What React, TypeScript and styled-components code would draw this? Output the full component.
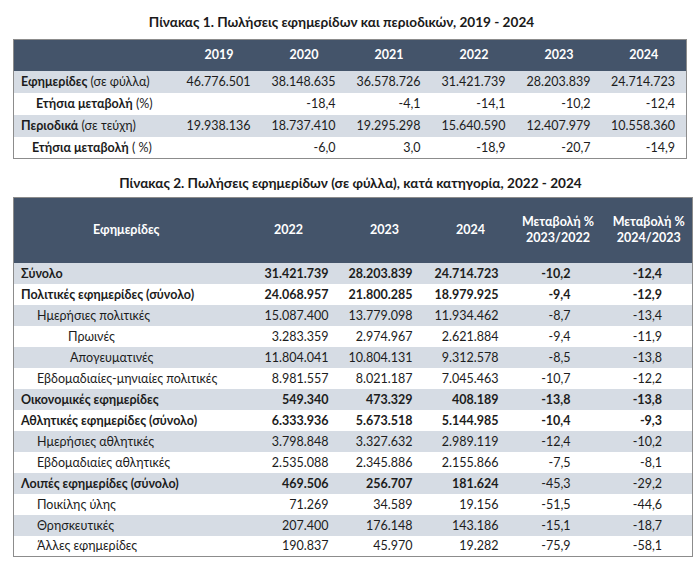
import React from 'react';
import styled, { createGlobalStyle } from 'styled-components';

const Global = createGlobalStyle`
  html, body { margin: 0; padding: 0; background: #ffffff; }
  body { font-family: Lato, "Open Sans", "Noto Sans", sans-serif; color: #1c1c1c; }
`;

const Page = styled.main`
  display: flex;
  flex-direction: column;
  align-items: flex-start;
  padding: 12px 8px 0 13px;
`;

const Title = styled.h2<{ $w: number; $mt: number; $mb: number; $shift: number }>`
  width: ${p => p.$w}px;
  margin: ${p => p.$mt}px 0 ${p => p.$mb}px;
  padding-right: ${p => p.$shift}px;
  box-sizing: border-box;
  font-size: 13.6px;
  font-weight: 700;
  line-height: 20px;
  text-align: center;
  color: #1a1a1a;
`;

const Table = styled.table<{ $w: number }>`
  width: ${p => p.$w}px;
  border-collapse: collapse;
  table-layout: fixed;
  border: 1px solid #8c8c8c;
  font-size: 12.5px;
`;

const HeadRow = styled.tr<{ $h: number }>`
  height: ${p => p.$h}px;
  background: #44546a;
`;

const HeadCell = styled.th`
  color: #ffffff;
  font-weight: 700;
  text-align: center;
  padding: 0;
  line-height: 16px;
`;

const Row = styled.tr<{ $shade: boolean; $h: number }>`
  height: ${p => p.$h}px;
  background: ${p => (p.$shade ? '#d6dce4' : '#ffffff')};
`;

const LabelCell = styled.td<{ $indent: number; $bold?: boolean }>`
  padding: 0 0 0 ${p => p.$indent}px;
  text-align: left;
  white-space: nowrap;
  font-weight: ${p => (p.$bold ? 700 : 400)};
`;

const NumCell = styled.td<{ $pad: number; $bold?: boolean }>`
  padding: 0 ${p => p.$pad}px 0 0;
  text-align: right;
  white-space: nowrap;
  font-weight: ${p => (p.$bold ? 700 : 400)};
`;

const Strong = styled.span`
  font-weight: 700;
`;

const t1Cols = [163, 85, 85, 85, 85, 85, 85];
const t1Rows: { bold: string; rest: string; indent: number; vals: string[] }[] = [
  { bold: 'Εφημερίδες', rest: ' (σε φύλλα)', indent: 7, vals: ['46.776.501', '38.148.635', '36.578.726', '31.421.739', '28.203.839', '24.714.723'] },
  { bold: 'Ετήσια μεταβολή', rest: ' (%)', indent: 22, vals: ['', '-18,4', '-4,1', '-14,1', '-10,2', '-12,4'] },
  { bold: 'Περιοδικά', rest: ' (σε τεύχη)', indent: 7, vals: ['19.938.136', '18.737.410', '19.295.298', '15.640.590', '12.407.979', '10.558.360'] },
  { bold: 'Ετήσια μεταβολή', rest: ' ( %)', indent: 18, vals: ['', '-6,0', '3,0', '-18,9', '-20,7', '-14,9'] },
];

const t2Cols = [225, 100, 92, 80, 95, 87];
const t2Pads = [10, 18, 12, 35, 30];
type R2 = { label: string; indent: number; bold: boolean; boldVals: boolean[]; vals: string[] };
const B = [true, true, true, true, true];
const N = [false, false, false, false, false];
const t2Rows: R2[] = [
  { label: 'Σύνολο', indent: 7, bold: true, boldVals: B, vals: ['31.421.739', '28.203.839', '24.714.723', '-10,2', '-12,4'] },
  { label: 'Πολιτικές εφημερίδες (σύνολο)', indent: 7, bold: true, boldVals: B, vals: ['24.068.957', '21.800.285', '18.979.925', '-9,4', '-12,9'] },
  { label: 'Ημερήσιες πολιτικές', indent: 23, bold: false, boldVals: N, vals: ['15.087.400', '13.779.098', '11.934.462', '-8,7', '-13,4'] },
  { label: 'Πρωινές', indent: 54, bold: false, boldVals: N, vals: ['3.283.359', '2.974.967', '2.621.884', '-9,4', '-11,9'] },
  { label: 'Απογευματινές', indent: 56, bold: false, boldVals: N, vals: ['11.804.041', '10.804.131', '9.312.578', '-8,5', '-13,8'] },
  { label: 'Εβδομαδιαίες-μηνιαίες πολιτικές', indent: 23, bold: false, boldVals: N, vals: ['8.981.557', '8.021.187', '7.045.463', '-10,7', '-12,2'] },
  { label: 'Οικονομικές εφημερίδες', indent: 7, bold: true, boldVals: B, vals: ['549.340', '473.329', '408.189', '-13,8', '-13,8'] },
  { label: 'Αθλητικές εφημερίδες (σύνολο)', indent: 7, bold: true, boldVals: B, vals: ['6.333.936', '5.673.518', '5.144.985', '-10,4', '-9,3'] },
  { label: 'Ημερήσιες αθλητικές', indent: 23, bold: false, boldVals: N, vals: ['3.798.848', '3.327.632', '2.989.119', '-12,4', '-10,2'] },
  { label: 'Εβδομαδιαίες αθλητικές', indent: 23, bold: false, boldVals: N, vals: ['2.535.088', '2.345.886', '2.155.866', '-7,5', '-8,1'] },
  { label: 'Λοιπές εφημερίδες (σύνολο)', indent: 7, bold: true, boldVals: [true, true, true, false, false], vals: ['469.506', '256.707', '181.624', '-45,3', '-29,2'] },
  { label: 'Ποικίλης ύλης', indent: 23, bold: false, boldVals: N, vals: ['71.269', '34.589', '19.156', '-51,5', '-44,6'] },
  { label: 'Θρησκευτικές', indent: 23, bold: false, boldVals: N, vals: ['207.400', '176.148', '143.186', '-15,1', '-18,7'] },
  { label: 'Άλλες εφημερίδες', indent: 23, bold: false, boldVals: N, vals: ['190.837', '45.970', '19.282', '-75,9', '-58,1'] },
];

export default function App() {
  return (
    <>
      <Global />
      <Page>
        <Title $w={673} $mt={0} $mb={7} $shift={16}>
          Πίνακας 1. Πωλήσεις εφημερίδων και περιοδικών, 2019 - 2024
        </Title>
        <Table $w={673}>
          <colgroup>
            {t1Cols.map((w, i) => (
              <col key={i} style={{ width: w }} />
            ))}
          </colgroup>
          <thead>
            <HeadRow $h={31}>
              <HeadCell />
              {['2019', '2020', '2021', '2022', '2023', '2024'].map(y => (
                <HeadCell key={y}>{y}</HeadCell>
              ))}
            </HeadRow>
          </thead>
          <tbody>
            {t1Rows.map((r, i) => (
              <Row key={i} $shade={i % 2 === 0} $h={22}>
                <LabelCell $indent={r.indent}>
                  <Strong>{r.bold}</Strong>
                  {r.rest}
                </LabelCell>
                {r.vals.map((v, j) => (
                  <NumCell key={j} $pad={11}>
                    {v}
                  </NumCell>
                ))}
              </Row>
            ))}
          </tbody>
        </Table>

        <Title $w={679} $mt={14} $mb={4} $shift={4}>
          Πίνακας 2. Πωλήσεις εφημερίδων (σε φύλλα), κατά κατηγορία, 2022 - 2024
        </Title>
        <Table $w={679}>
          <colgroup>
            {t2Cols.map((w, i) => (
              <col key={i} style={{ width: w }} />
            ))}
          </colgroup>
          <thead>
            <HeadRow $h={65}>
              <HeadCell>Εφημερίδες</HeadCell>
              <HeadCell>2022</HeadCell>
              <HeadCell>2023</HeadCell>
              <HeadCell>2024</HeadCell>
              <HeadCell>
                Μεταβολή %
                <br />
                2023/2022
              </HeadCell>
              <HeadCell>
                Μεταβολή %
                <br />
                2024/2023
              </HeadCell>
            </HeadRow>
          </thead>
          <tbody>
            {t2Rows.map((r, i) => (
              <Row key={i} $shade={i % 2 === 0} $h={21}>
                <LabelCell $indent={r.indent} $bold={r.bold}>
                  {r.label}
                </LabelCell>
                {r.vals.map((v, j) => (
                  <NumCell key={j} $pad={t2Pads[j]} $bold={r.boldVals[j]}>
                    {v}
                  </NumCell>
                ))}
              </Row>
            ))}
          </tbody>
        </Table>
      </Page>
    </>
  );
}
